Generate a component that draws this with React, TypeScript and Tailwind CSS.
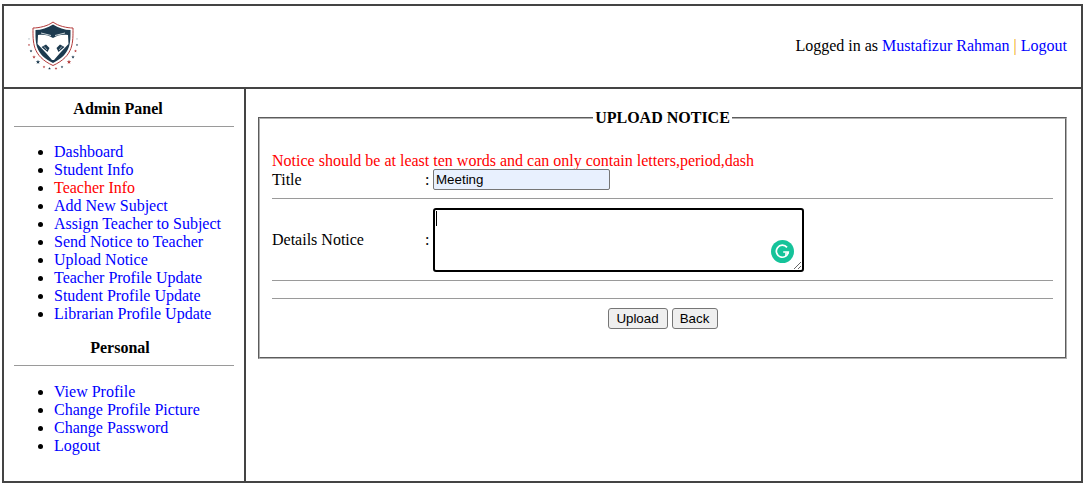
const adminLinks = [
  "Dashboard",
  "Student Info",
  "Teacher Info",
  "Add New Subject",
  "Assign Teacher to Subject",
  "Send Notice to Teacher",
  "Upload Notice",
  "Teacher Profile Update",
  "Student Profile Update",
  "Librarian Profile Update",
];

const personalLinks = ["View Profile", "Change Profile Picture", "Change Password", "Logout"];

function Star({ x, y, r, fill }: { x: number; y: number; r: number; fill: string }) {
  const pts = Array.from({ length: 10 }, (_, i) => {
    const a = (Math.PI / 5) * i - Math.PI / 2;
    const d = i % 2 === 0 ? r : r * 0.42;
    return `${x + d * Math.cos(a)},${y + d * Math.sin(a)}`;
  }).join(" ");
  return <polygon points={pts} fill={fill} />;
}

function Logo() {
  const red = "#b23a3a";
  const navy = "#1c3a4f";
  const stars: [number, number, string, number][] = [
    [6, 21, navy, 0.7],
    [6, 27, red, 1.2],
    [8, 33, navy, 1.5],
    [11, 39, red, 1.8],
    [15, 44, navy, 2.3],
    [21, 49, red, 1.4],
    [26.5, 50.5, navy, 1.4],
    [33, 50.5, red, 1.4],
    [39, 49, navy, 1.4],
    [46, 44, red, 2.3],
    [50, 39, navy, 1.8],
    [52.5, 33, red, 1.5],
    [54, 27, navy, 1.2],
    [54, 21, navy, 0.7],
  ];
  return (
    <svg width="60" height="60" viewBox="0 0 60 60" className="mt-[3px]">
      <path d="M30 4 C25 8 16 10 10 10 C10 24 9 38 30 47.5 C51 38 50 24 50 10 C44 10 35 8 30 4 Z" fill="#fff" stroke={red} strokeWidth="1" />
      <path d="M30 6.5 C25 10 18 12 12.5 12 C12.5 25 12 36 30 45 C48 36 47.5 25 47.5 12 C42 12 35 10 30 6.5 Z" fill={navy} />
      <path d="M15 17 C20 16 26 17 30 20 C34 17 40 16 45 17 L45.5 26 L37 35 L31 42 L29 42 L23 35 L14.5 26 Z" fill="#fff" />
      <path d="M18 15 L28 17.5 M42 15 L32 17.5" stroke="#cfd8dc" strokeWidth="1" />
      <path d="M18.5 29 L23 26.5 L26.5 30 L24.5 34 Z M41.5 29 L37 26.5 L33.5 30 L35.5 34 Z" fill={navy} />
      <path d="M21 28.5 L24 32 M39 28.5 L36 32" stroke="#fff" strokeWidth="0.6" />
      {stars.map(([x, y, c, r]) => (
        <Star key={`${x}-${y}`} x={x} y={y} r={r} fill={c} />
      ))}
    </svg>
  );
}

function LinkList({ items, className }: { items: string[]; className: string }) {
  return (
    <ul className={`list-disc pl-10 mb-4 ${className}`}>
      {items.map((item) => (
        <li key={item}>
          <a href="#" className={item === "Teacher Info" ? "text-[#ff0000]" : "text-[#0000ff]"}>
            {item}
          </a>
        </li>
      ))}
    </ul>
  );
}

function Divider({ className }: { className: string }) {
  return <hr className={`border-0 h-px bg-[#9a9a9a] ${className}`} />;
}

export default function App() {
  return (
    <div className="font-['Liberation_Serif',serif] text-base leading-[18px] text-black bg-white h-[487px] pl-[2px] pr-[2px] pt-[4px] pb-[4px]">
      <div className="h-full flex flex-col border-2 border-[#444444]">
        <header className="h-[83px] shrink-0 flex items-center justify-between pl-[19px] pr-[14px] border-b-2 border-[#444444]">
          <Logo />
          <div className="mt-[-2px]">
            Logged in as <a href="#" className="text-[#0000ff]">Mustafizur Rahman</a>{" "}
            <span className="text-[#f0a000]">|</span>{" "}
            <a href="#" className="text-[#0000ff]">Logout</a>
          </div>
        </header>

        <div className="flex-1 flex min-h-0">
          <aside className="w-[242px] shrink-0 border-r-2 border-[#444444] px-[10px] pt-[11px]">
            <h3 className="font-bold text-center pr-3">Admin Panel</h3>
            <Divider className="mt-[8px]" />
            <LinkList items={adminLinks} className="mt-4" />
            <h3 className="font-bold text-center pr-2">Personal</h3>
            <Divider className="mt-[8px]" />
            <LinkList items={personalLinks} className="mt-[17px]" />
          </aside>

          <main className="flex-1 pl-3 pr-[14px] pt-[20px]">
            <fieldset className="border-2 [border-style:groove] border-[#b0b0b0] h-[250px] px-3 pb-3">
              <legend className="mx-auto font-bold px-[2px]">UPLOAD NOTICE</legend>
              <p className="text-[#ff0000] mt-[25px] h-[17px]">Notice should be at least ten words and can only contain letters,period,dash</p>
              <div className="flex items-center">
                <span className="w-[153px]">Title</span>
                <span className="w-[8px]">:</span>
                <input
                  defaultValue="Meeting"
                  className="w-[177px] h-[21px] px-[2px] font-['Liberation_Sans',sans-serif] text-[13.33px] bg-[#e8f0fe] border border-[#767676] rounded-[2px]"
                />
              </div>
              <Divider className="mt-[8px]" />
              <div className="flex items-center mt-[9px]">
                <span className="w-[153px]">Details Notice</span>
                <span className="w-[8px]">:</span>
                <div className="relative flex">
                  <textarea className="w-[371px] h-[64px] border-2 border-black rounded-[3px] bg-white" />
                  <span className="absolute left-[3px] top-[3px] w-px h-[15px] bg-black" />
                  <span className="absolute left-[338px] top-[32px] w-[23px] h-[23px] rounded-full bg-[#15c39a] flex items-center justify-center">
                    <svg width="15" height="15" viewBox="0 0 15 15" fill="none" stroke="#fff" strokeWidth="1.7">
                      <path d="M12 3.4 A6 6 0 1 0 13.3 8 L8.2 8" />
                      <path d="M10.8 12.6 L10.8 9.2 L13.8 9.2" strokeWidth="1.2" />
                    </svg>
                  </span>
                </div>
              </div>
              <Divider className="mt-[8px]" />
              <Divider className="mt-[17px]" />
              <div className="flex justify-center gap-1 mt-[9px] font-['Liberation_Sans',sans-serif] text-[13.33px]">
                <button className="h-[21px] w-[60px] bg-[#efefef] border border-[#767676] rounded-[3px]">Upload</button>
                <button className="h-[21px] w-[46px] bg-[#efefef] border border-[#767676] rounded-[3px]">Back</button>
              </div>
            </fieldset>
          </main>
        </div>
      </div>
    </div>
  );
}
